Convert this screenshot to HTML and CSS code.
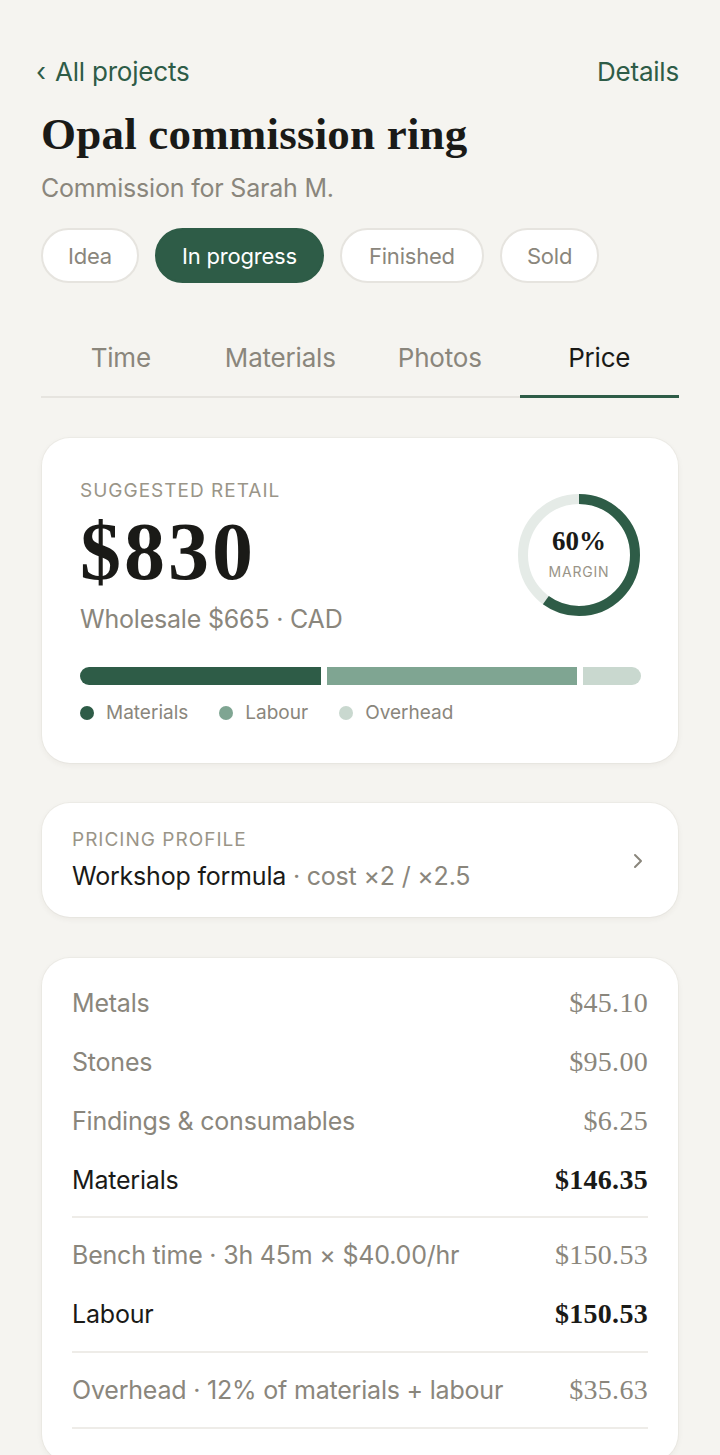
FILE: index.html
```html
<!DOCTYPE html>
<html lang="en">
<head>
    <meta charset="UTF-8">
    <meta name="viewport" content="width=device-width, initial-scale=1.0">
    <title>Opal commission ring · Price</title>
    <link rel="stylesheet" href="styles.css">
</head>
<body>
    <div class="page">
        <div class="topbar">
            <a class="back" href="#"><span class="back-chev">‹</span> All projects</a>
            <a class="details" href="#">Details</a>
        </div>

        <h1 class="title">Opal commission ring</h1>
        <p class="subtitle">Commission for Sarah M.</p>

        <div class="chips">
            <button class="chip">Idea</button>
            <button class="chip active">In progress</button>
            <button class="chip">Finished</button>
            <button class="chip">Sold</button>
        </div>

        <nav class="tabs">
            <a class="tab" href="#">Time</a>
            <a class="tab" href="#">Materials</a>
            <a class="tab" href="#">Photos</a>
            <a class="tab active" href="#">Price</a>
        </nav>

        <section class="card retail">
            <div class="retail-top">
                <div class="retail-info">
                    <div class="label">Suggested retail</div>
                    <div class="retail-price">$830</div>
                    <div class="wholesale">Wholesale $665 · CAD</div>
                </div>
                <div class="ring">
                    <svg width="124" height="124" viewBox="0 0 124 124">
                        <circle cx="62" cy="62" r="56" fill="none" stroke="#e5ebe7" stroke-width="10"/>
                        <circle cx="62" cy="62" r="56" fill="none" stroke="#2e5c47" stroke-width="10"
                                stroke-dasharray="211.1 351.9" transform="rotate(-90 62 62)"/>
                    </svg>
                    <div class="ring-text">
                        <div class="ring-value">60%</div>
                        <div class="ring-label">Margin</div>
                    </div>
                </div>
            </div>

            <div class="split">
                <div class="seg seg-materials" style="width: 43%"></div>
                <div class="seg seg-labour" style="width: 44.5%"></div>
                <div class="seg seg-overhead" style="flex: 1"></div>
            </div>

            <div class="legend">
                <span class="key"><i class="dot seg-materials"></i>Materials</span>
                <span class="key"><i class="dot seg-labour"></i>Labour</span>
                <span class="key"><i class="dot seg-overhead"></i>Overhead</span>
            </div>
        </section>

        <a class="card profile" href="#">
            <div>
                <div class="label">Pricing profile</div>
                <div class="profile-name">Workshop formula <span class="muted">· cost ×2 / ×2.5</span></div>
            </div>
            <svg class="chev" width="12" height="18" viewBox="0 0 12 18">
                <path d="M3 3l6 6-6 6" fill="none" stroke="#8a867c" stroke-width="2" stroke-linecap="round" stroke-linejoin="round"/>
            </svg>
        </a>

        <section class="card breakdown">
            <div class="row"><span>Metals</span><span class="amt">$45.10</span></div>
            <div class="row"><span>Stones</span><span class="amt">$95.00</span></div>
            <div class="row"><span>Findings &amp; consumables</span><span class="amt">$6.25</span></div>
            <div class="row total"><span>Materials</span><span class="amt">$146.35</span></div>
            <hr class="rule">
            <div class="row"><span>Bench time · 3h 45m × $40.00/hr</span><span class="amt">$150.53</span></div>
            <div class="row total"><span>Labour</span><span class="amt">$150.53</span></div>
            <hr class="rule">
            <div class="row"><span>Overhead · 12% of materials + labour</span><span class="amt">$35.63</span></div>
            <hr class="rule">
        </section>
    </div>
</body>
</html>
```

FILE: styles.css
```css
* {
    box-sizing: border-box;
}
body {
    margin: 0;
    background-color: #f5f4f0;
    color: #1a1a17;
    font-family: 'Inter', 'Roboto', sans-serif;
}
a {
    text-decoration: none;
    color: inherit;
}
.page {
    padding: 54px 41px 40px;
}

/* header */
.topbar {
    display: flex;
    justify-content: space-between;
    align-items: center;
    font-size: 26px;
    line-height: 36px;
    color: #2e5c47;
    letter-spacing: -0.2px;
}
.back-chev {
    display: inline-block;
    margin-left: -5px;
    margin-right: 2px;
    font-size: 26px;
}
.title {
    margin: 16px 0 0;
    font-family: 'Liberation Serif', serif;
    font-size: 45px;
    line-height: 56px;
    font-weight: 700;
    letter-spacing: 0.2px;
}
.subtitle {
    margin: 10px 0 0;
    font-size: 25px;
    line-height: 32px;
    color: #8a867c;
    letter-spacing: -0.2px;
}

/* status chips */
.chips {
    display: flex;
    gap: 16px;
    margin-top: 24px;
}
.chip {
    height: 55px;
    padding: 0 25px;
    border: 2px solid #e6e4df;
    border-radius: 28px;
    background-color: #fff;
    color: #8a867c;
    font-family: inherit;
    font-size: 22px;
    letter-spacing: -0.2px;
}
.chip:nth-child(3) {
    padding: 0 27px;
}
.chip.active {
    background-color: #2e5c47;
    border-color: #2e5c47;
    color: #fff;
}

/* tabs */
.tabs {
    display: grid;
    grid-template-columns: repeat(4, 1fr);
    margin-top: 55px;
    border-bottom: 2px solid #e6e4df;
}
.tab {
    text-align: center;
    font-size: 26px;
    line-height: 40px;
    padding-bottom: 17px;
    color: #8a867c;
    margin-bottom: -2px;
    border-bottom: 3px solid transparent;
    letter-spacing: -0.2px;
}
.tab.active {
    color: #1a1a17;
    border-bottom-color: #2e5c47;
}

/* cards */
.card {
    display: block;
    background-color: #fff;
    border-radius: 28px;
    box-shadow: 0 2px 6px rgba(60, 55, 40, 0.06), 0 0 0 1px rgba(60, 55, 40, 0.03);
    margin: 0 1px;
}
.label {
    font-size: 19px;
    line-height: 22px;
    letter-spacing: 1px;
    text-transform: uppercase;
    color: #9a9588;
}

.retail {
    margin-top: 40px;
    padding: 42px 37px 39px 38px;
}
.retail-top {
    display: flex;
    justify-content: space-between;
    align-items: flex-start;
}
.retail-price {
    margin-top: 10px;
    font-family: 'Liberation Serif', serif;
    font-weight: 700;
    font-size: 82px;
    line-height: 80px;
    letter-spacing: 3px;
}
.wholesale {
    margin-top: 11px;
    font-size: 25px;
    line-height: 32px;
    color: #8a867c;
    letter-spacing: -0.2px;
}
.ring {
    position: relative;
    width: 124px;
    height: 124px;
    margin-top: 13px;
}
.ring svg {
    display: block;
}
.ring-text {
    position: absolute;
    inset: 0;
    display: flex;
    flex-direction: column;
    align-items: center;
    justify-content: center;
}
.ring-value {
    font-family: 'Liberation Serif', serif;
    font-weight: 700;
    font-size: 27px;
    line-height: 30px;
    margin-top: -4px;
}
.ring-label {
    margin-top: 7px;
    font-size: 14px;
    letter-spacing: 0.8px;
    text-transform: uppercase;
    color: #9a9588;
}

.split {
    display: flex;
    gap: 6px;
    height: 18px;
    margin-top: 32px;
}
.seg:first-child {
    border-radius: 9px 0 0 9px;
}
.seg:last-child {
    border-radius: 0 9px 9px 0;
}
.seg-materials {
    background-color: #2e5c47;
}
.seg-labour {
    background-color: #7fa592;
}
.seg-overhead {
    background-color: #c9d8cf;
}
.legend {
    display: flex;
    gap: 31px;
    margin-top: 17px;
    font-size: 19px;
    line-height: 22px;
    color: #8a867c;
}
.key {
    display: flex;
    align-items: center;
}
.dot {
    width: 14px;
    height: 14px;
    border-radius: 50%;
    margin-right: 12px;
}

/* pricing profile */
.profile {
    display: flex;
    justify-content: space-between;
    align-items: center;
    margin-top: 40px;
    padding: 26px 34px 24px 30px;
}
.profile-name {
    margin-top: 8px;
    font-size: 25px;
    line-height: 34px;
    color: #1a1a17;
    letter-spacing: -0.2px;
}
.muted {
    color: #8a867c;
}

/* breakdown */
.breakdown {
    margin-top: 41px;
    padding: 15px 30px 26px;
}
.row {
    display: flex;
    justify-content: space-between;
    align-items: baseline;
    height: 59px;
    font-size: 25px;
    line-height: 59px;
    color: #8a867c;
    letter-spacing: -0.2px;
}
.amt {
    font-family: 'Liberation Serif', serif;
    font-size: 28px;
    letter-spacing: 0.3px;
}
.row.total {
    color: #1a1a17;
}
.row.total .amt {
    font-weight: 700;
}
.rule {
    margin: 7px 0;
    border: 0;
    border-top: 2px solid #eeece8;
}
.rule:not(:first-of-type) {
    margin-top: 8px;
}
```
